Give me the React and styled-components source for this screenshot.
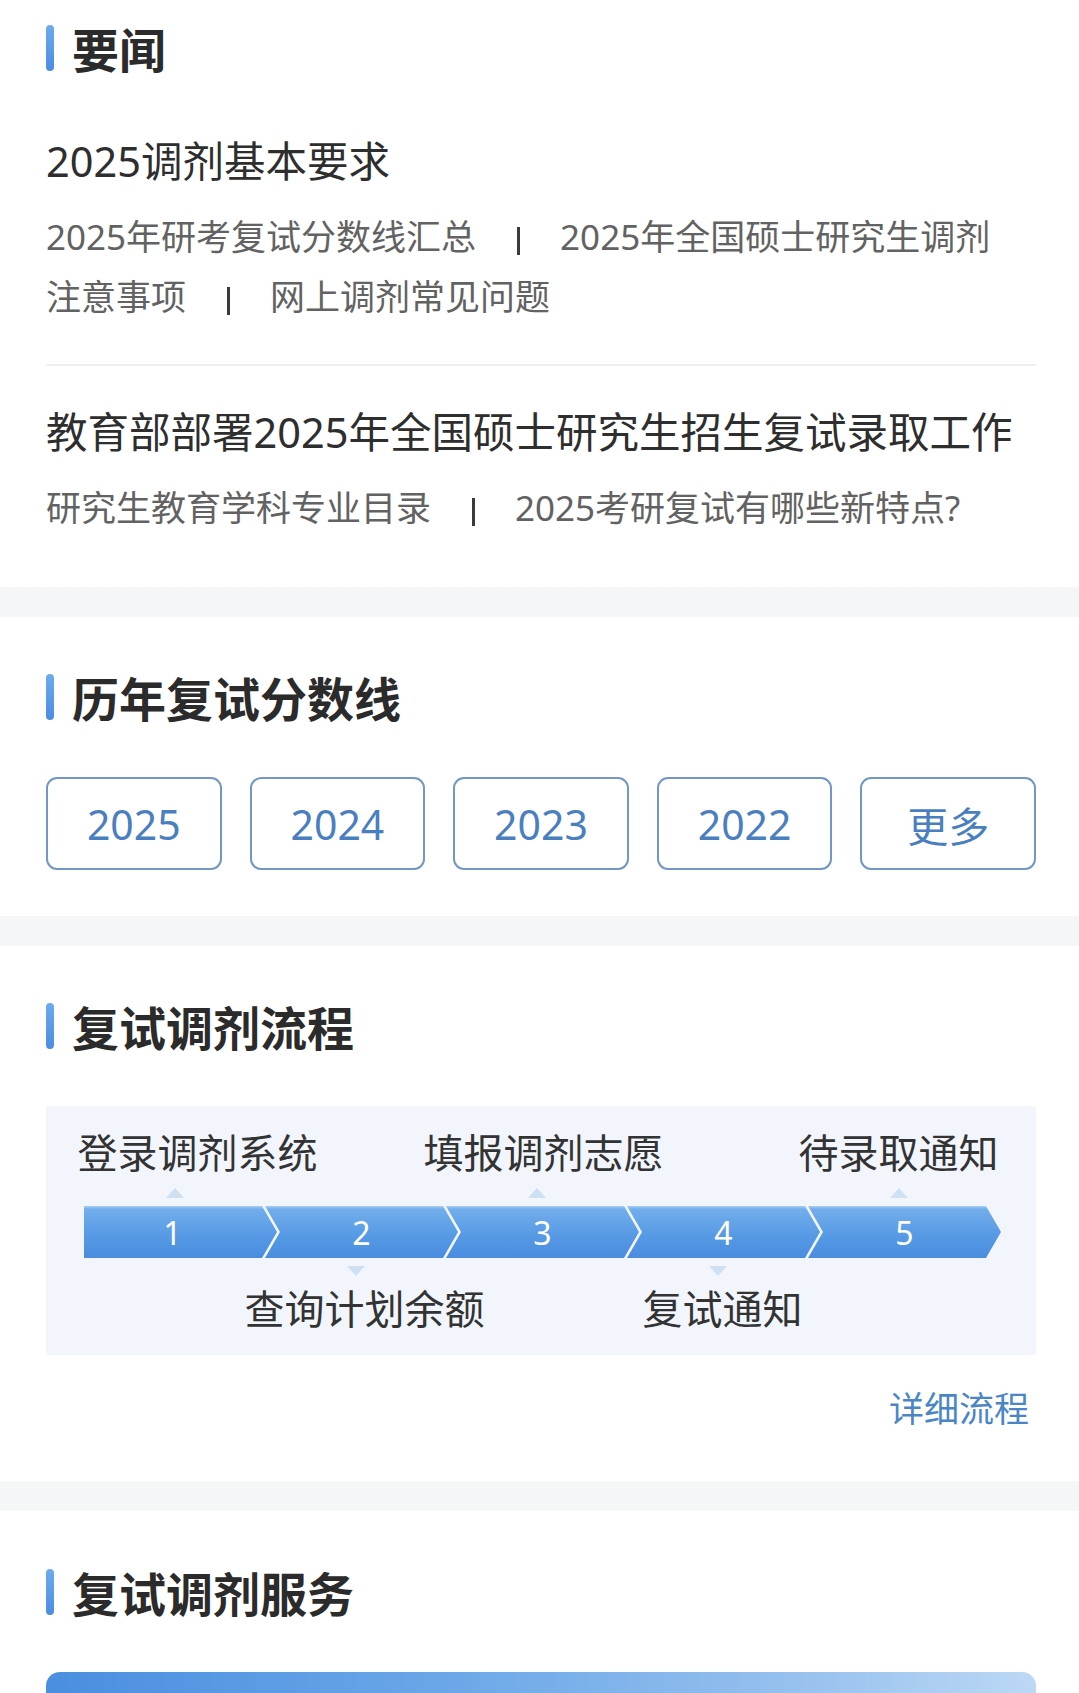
import React from "react";
import styled, { createGlobalStyle } from "styled-components";

const FONT = `"Noto Sans", "Noto Sans CJK SC", sans-serif`;

const GlobalStyle = createGlobalStyle`
  html, body {
    margin: 0;
    padding: 0;
    background: #f5f6f8;
  }
  body {
    font-family: ${FONT};
    color: #2e2e2e;
  }
  * { box-sizing: border-box; }
`;

const Page = styled.div`
  width: 1079px;
  display: flex;
  flex-direction: column;
  gap: 30px;
`;

const Section = styled.section`
  background: #ffffff;
  padding: ${(p) => p.$pad || "57px 43px 46px 46px"};
`;

const Header = styled.div`
  display: flex;
  align-items: center;
  gap: 18px;
  height: 46px;
`;

const HeaderBar = styled.span`
  width: 8px;
  height: 46px;
  border-radius: 4px;
  background: linear-gradient(180deg, #6eabee 0%, #4a8de0 100%);
  flex: none;
`;

const HeaderTitle = styled.h2`
  margin: 0;
  font-family: "Noto Sans CJK SC", sans-serif;
  font-size: 47px;
  line-height: 46px;
  font-weight: 700;
  color: #2b2b2b;
`;

const NewsList = styled.div`
  margin-top: 24px;
  display: flex;
  flex-direction: column;
`;

const NewsItem = styled.div`
  padding: 38px 0 ${(p) => (p.$last ? "0" : "37px")};
  border-bottom: ${(p) => (p.$last ? "none" : "2px solid #efefef")};
`;

const NewsTitle = styled.div`
  font-size: 41.5px;
  line-height: 56px;
  color: #2e2e2e;
  white-space: nowrap;
`;

const SubLinks = styled.div`
  margin-top: 18px;
  max-width: 975px;
  font-size: 35px;
  line-height: 60px;
  color: #626262;
`;

const Sep = styled.span`
  display: inline-block;
  width: 3px;
  height: 28px;
  min-height: 28px;
  background-color: #3a3a3a;
  margin: 0 40px 0 41px;
  vertical-align: middle;
`;

const YearRow = styled.div`
  margin-top: 57px;
  display: grid;
  grid-template-columns: repeat(5, 1fr);
  gap: 28px;
`;

const YearButton = styled.button`
  height: 93px;
  border: 2px solid #7397c4;
  border-radius: 11px;
  background: #ffffff;
  color: #4a7fbf;
  font-family: ${FONT};
  font-size: 41px;
  padding: 0;
  display: flex;
  align-items: center;
  justify-content: center;
`;

const FlowBox = styled.div`
  margin-top: 57px;
  background: #f2f6fc;
  padding: 23px 33px 22px 38px;
  display: flex;
  flex-direction: column;
`;

const STEP = 181;

const Track = styled.div`
  display: flex;
`;

const Cell = styled.div`
  width: ${STEP}px;
  flex: none;
  display: flex;
  justify-content: center;
  padding-left: ${(p) => p.$shift || 0}px;
`;

const StepLabel = styled.span`
  font-size: 40px;
  line-height: 48px;
  color: #333333;
  white-space: nowrap;
`;

const Tri = styled.span`
  width: 0;
  height: 0;
  border-left: 9px solid transparent;
  border-right: 9px solid transparent;
  ${(p) =>
    p.$down
      ? "border-top: 10px solid #cfe0f2;"
      : "border-bottom: 10px solid #cfe0f2;"}
  visibility: ${(p) => (p.$show ? "visible" : "hidden")};
`;

const TriRow = styled(Track)`
  height: 10px;
  margin: ${(p) => (p.$down ? "8px 0 9px" : "11px 0 8px")};
`;

const Arrow = styled.div`
  display: flex;
  height: 52px;
`;

const Segment = styled.div`
  width: 193px;
  height: 52px;
  flex: none;
  margin-left: ${(p) => (p.$first ? 0 : STEP - 193)}px;
  background: linear-gradient(180deg, #a9cff4 0px, #72aeec 3px, #5598e4 60%, #4a8de0 100%);
  clip-path: ${(p) =>
    p.$first
      ? "polygon(0 0, 178px 0, 193px 50%, 178px 100%, 0 100%)"
      : "polygon(0 0, 178px 0, 193px 50%, 178px 100%, 0 100%, 15px 50%)"};
  display: flex;
  align-items: center;
  justify-content: center;
  padding-right: ${(p) => (p.$first ? 16 : 0)}px;
  color: #ffffff;
  font-family: "Noto Sans", sans-serif;
  font-size: 32px;
`;

const MoreRow = styled.div`
  display: flex;
  justify-content: flex-end;
  padding: 29px 7px 0 0;
`;

const MoreLink = styled.a`
  font-size: 35px;
  line-height: 50px;
  color: #4a86c5;
  text-decoration: none;
`;

const ServiceCard = styled.div`
  margin-top: 57px;
  height: 140px;
  border-radius: 14px;
  background: linear-gradient(90deg, #4a8ee0 0%, #6aa7e8 40%, #96c0ee 75%, #bcd8f5 100%);
`;

const years = ["2025", "2024", "2023", "2022", "更多"];

function SectionHeader({ children }) {
  return (
    <Header>
      <HeaderBar />
      <HeaderTitle>{children}</HeaderTitle>
    </Header>
  );
}

export default function App() {
  return (
    <>
      <GlobalStyle />
      <Page>
        <Section $pad="25px 43px 49px 46px">
          <SectionHeader>要闻</SectionHeader>
          <NewsList>
            <NewsItem>
              <NewsTitle>2025调剂基本要求</NewsTitle>
              <SubLinks>
                2025年研考复试分数线汇总<Sep />2025年全国硕士研究生调剂注意事项<Sep />网上调剂常见问题
              </SubLinks>
            </NewsItem>
            <NewsItem $last>
              <NewsTitle>教育部部署2025年全国硕士研究生招生复试录取工作</NewsTitle>
              <SubLinks>
                研究生教育学科专业目录<Sep />2025考研复试有哪些新特点?
              </SubLinks>
            </NewsItem>
          </NewsList>
        </Section>

        <Section>
          <SectionHeader>历年复试分数线</SectionHeader>
          <YearRow>
            {years.map((y) => (
              <YearButton key={y}>{y}</YearButton>
            ))}
          </YearRow>
        </Section>

        <Section $pad="57px 43px 47px 46px">
          <SectionHeader>复试调剂流程</SectionHeader>
          <FlowBox>
            <Track>
              <Cell $shift={46}>
                <StepLabel>登录调剂系统</StepLabel>
              </Cell>
              <Cell />
              <Cell $shift={14}>
                <StepLabel>填报调剂志愿</StepLabel>
              </Cell>
              <Cell />
              <Cell>
                <StepLabel>待录取通知</StepLabel>
              </Cell>
            </Track>
            <TriRow>
              {[1, 0, 1, 0, 1].map((s, i) => (
                <Cell key={i}>
                  <Tri $show={!!s} />
                </Cell>
              ))}
            </TriRow>
            <Arrow>
              {[1, 2, 3, 4, 5].map((n) => (
                <Segment key={n} $first={n === 1}>
                  {n}
                </Segment>
              ))}
            </Arrow>
            <TriRow $down>
              {[0, 1, 0, 1, 0].map((s, i) => (
                <Cell key={i}>
                  <Tri $down $show={!!s} />
                </Cell>
              ))}
            </TriRow>
            <Track>
              <Cell />
              <Cell $shift={18}>
                <StepLabel>查询计划余额</StepLabel>
              </Cell>
              <Cell />
              <Cell $shift={10}>
                <StepLabel>复试通知</StepLabel>
              </Cell>
              <Cell />
            </Track>
          </FlowBox>
          <MoreRow>
            <MoreLink href="#">详细流程</MoreLink>
          </MoreRow>
        </Section>

        <Section $pad="58px 43px 0 46px">
          <SectionHeader>复试调剂服务</SectionHeader>
          <ServiceCard />
        </Section>
      </Page>
    </>
  );
}
